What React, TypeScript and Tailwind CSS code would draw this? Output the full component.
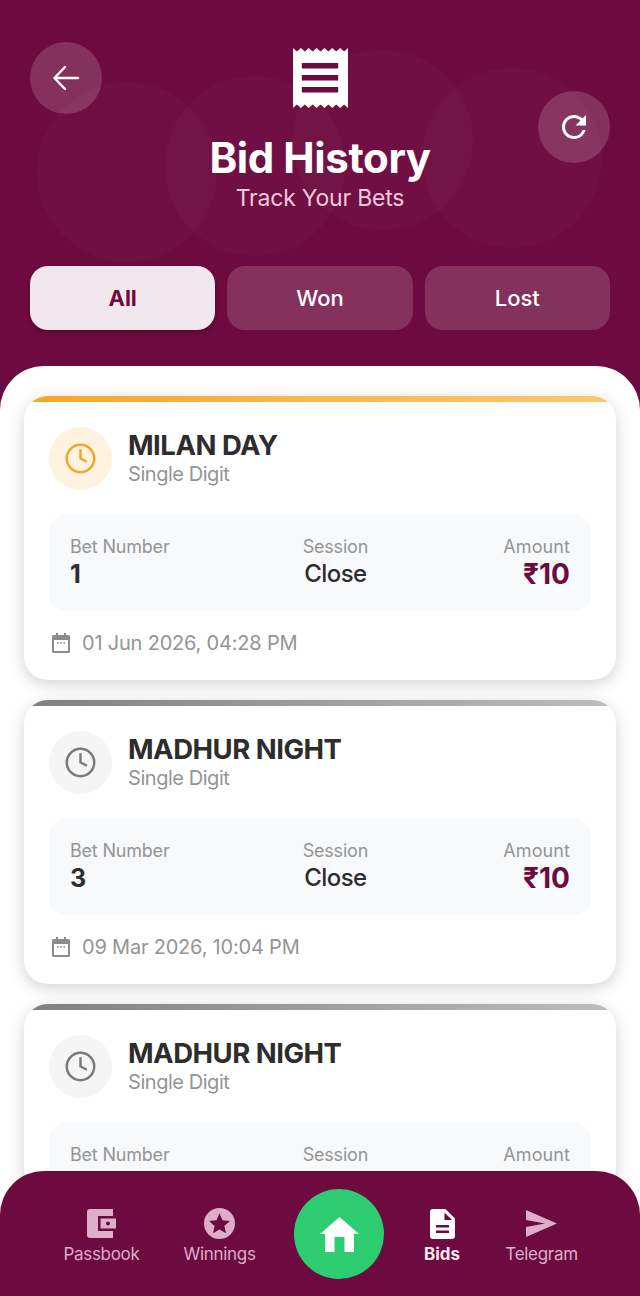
import type { ReactNode } from "react";
import { Clock } from "lucide-react";

const font = { fontFamily: "Inter, sans-serif" };

function ReceiptIcon() {
  return (
    <svg width="55" height="60" viewBox="0 0 56 60" preserveAspectRatio="none" className="block">
      <path
        fill="#fff"
        d="M0 0l4 3.500 4-3.500 4 3.500 4-3.500 4 3.500 4-3.500 4 3.500 4-3.500 4 3.500 4-3.500 4 3.500 4-3.500 4 3.500 4-3.500v60l-4-3.500-4 3.500-4-3.500-4 3.500-4-3.500-4 3.500-4-3.500-4 3.500-4-3.500-4 3.500-4-3.500-4 3.500-4-3.500-4 3.500z"
      />
      <rect x="9" y="15" width="37" height="5.500" fill="#6d0a3f" />
      <rect x="9" y="27" width="37" height="5.500" fill="#6d0a3f" />
      <rect x="9" y="39" width="37" height="5.500" fill="#6d0a3f" />
    </svg>
  );
}

type Bid = {
  market: string;
  number: string;
  date?: string;
  pending: boolean;
};

// la 3e carte passe sous la barre du bas, sa date n'est jamais visible
const bids: Bid[] = [
  { market: "MILAN DAY", number: "1", date: "01 Jun 2026, 04:28 PM", pending: true },
  { market: "MADHUR NIGHT", number: "3", date: "09 Mar 2026, 10:04 PM", pending: false },
  { market: "MADHUR NIGHT", number: "3", pending: false },
];

function BidCard({ bid }: { bid: Bid }) {
  return (
    <div className="h-[284px] shrink-0 overflow-hidden rounded-[24px] bg-white shadow-[0_4px_16px_rgba(0,0,0,0.18)]">
      <div
        className={
          bid.pending
            ? "h-[6px] bg-gradient-to-r from-[#f5a623] to-[#fdc96b]"
            : "h-[6px] bg-gradient-to-r from-[#808080] to-[#bdbdbd]"
        }
      />
      <div className="px-[25px] pt-[25px]">
        <div className="flex items-center gap-[16px]">
          <div
            className={
              bid.pending
                ? "flex h-[63px] w-[63px] items-center justify-center rounded-full bg-[#fff3e0]"
                : "flex h-[63px] w-[63px] items-center justify-center rounded-full bg-[#f5f5f5]"
            }
          >
            <Clock size={33} strokeWidth={1.8} color={bid.pending ? "#e8a92a" : "#7a7a7a"} />
          </div>
          <div>
            <div className="text-[27.5px] font-bold leading-[31px] tracking-[-0.5px] text-[#2d2d2d]">{bid.market}</div>
            <div className="text-[20px] leading-[26px] tracking-[-0.45px] text-[#949494]">Single Digit</div>
          </div>
        </div>
        <div className="mt-[25px] flex h-[96px] items-start justify-between rounded-[16px] bg-[#f8f9fb] px-[21px] pt-[20px]">
          <div>
            <div className="text-[18px] leading-[24px] tracking-[-0.2px] text-[#949494]">Bet Number</div>
            <div className="text-[25px] font-bold leading-[30px] text-[#2d2d2d]">{bid.number}</div>
          </div>
          <div className="-ml-[2px] text-center">
            <div className="text-[18px] leading-[24px] tracking-[-0.2px] text-[#949494]">Session</div>
            <div className="text-[24px] font-medium leading-[30px] tracking-[-0.6px] text-[#2d2d2d]">Close</div>
          </div>
          <div className="text-right">
            <div className="text-[18px] leading-[24px] tracking-[0.1px] text-[#949494]">Amount</div>
            <div className="text-[28px] font-bold leading-[30px] text-[#6d0a3f]">₹10</div>
          </div>
        </div>
        {bid.date && (
          <div className="mt-[18px] flex items-center gap-[12px] pl-[3px]">
            <svg width="18" height="20" viewBox="0 0 18 20" fill="#8c8c8c">
              <path
                fillRule="evenodd"
                d="M4 0h2v2h6V0h2v2h2.500A1.500 1.500 0 0 1 18 3.500v15a1.500 1.500 0 0 1-1.500 1.500h-15A1.500 1.500 0 0 1 0 18.500v-15A1.500 1.500 0 0 1 1.500 2H4zM2 7v11h14V7z"
              />
              <rect x="5" y="9" width="1.600" height="1.600" />
              <rect x="8.200" y="9" width="1.600" height="1.600" />
              <rect x="11.400" y="9" width="1.600" height="1.600" />
            </svg>
            <span className="text-[20px] leading-[28px] tracking-[-0.2px] text-[#949494]">{bid.date}</span>
          </div>
        )}
      </div>
    </div>
  );
}

function NavItem({ label, active, icon, className }: { label: string; active?: boolean; icon: ReactNode; className: string }) {
  return (
    <div className={className}>
      <div className="flex flex-col items-center">
        <div className="flex h-[31px] items-center justify-center">{icon}</div>
        <span
          className={
            active
              ? "mt-[4px] text-[17px] font-bold leading-[22px] text-[#f6e6ef]"
              : "mt-[4px] whitespace-nowrap text-[17px] leading-[22px] tracking-[-0.3px] text-[#dcaeca]"
          }
        >
          {label}
        </span>
      </div>
    </div>
  );
}

export default function App() {
  return (
    <div style={font} className="relative h-[1296px] w-[640px] overflow-hidden bg-[#6d0a3f]">
      {/* cercles décoratifs */}
      <div className="absolute left-[37px] top-[82px] h-[180px] w-[180px] rounded-full bg-white/[0.025]" />
      <div className="absolute left-[165px] top-[76px] h-[180px] w-[180px] rounded-full bg-white/[0.025]" />
      <div className="absolute left-[293px] top-[50px] h-[180px] w-[180px] rounded-full bg-white/[0.025]" />
      <div className="absolute left-[422px] top-[68px] h-[180px] w-[180px] rounded-full bg-white/[0.025]" />

      <header className="relative h-[366px] px-[30px] pt-[42px]">
        <div className="flex items-start justify-between">
          <div className="flex h-[72px] w-[72px] items-center justify-center rounded-full bg-white/[0.16]">
            <svg width="30" height="30" viewBox="0 0 30 30" fill="none" stroke="#fff" strokeWidth="2.400" strokeLinecap="round" strokeLinejoin="round">
              <path d="M27 15H3.500M14 4L3.500 15 14 26" />
            </svg>
          </div>
          <div className="flex flex-col items-center pt-[6px]">
            <ReceiptIcon />
            <h1 className="mt-[26px] text-[42px] font-bold leading-[48px] tracking-[-0.4px] text-white">Bid History</h1>
            <p className="mt-[1px] text-[23px] leading-[30px] tracking-[-0.2px] text-[#f0c9de]">Track Your Bets</p>
          </div>
          <div className="mt-[49px] flex h-[72px] w-[72px] items-center justify-center rounded-full bg-white/[0.16]">
            <svg width="36" height="36" viewBox="0 0 24 24" fill="#fff">
              <path d="M17.650 6.350A7.958 7.958 0 0 0 12 4c-4.420 0-7.990 3.580-7.990 8s3.570 8 7.990 8c3.730 0 6.840-2.550 7.730-6h-2.080A5.990 5.990 0 0 1 12 18c-3.310 0-6-2.690-6-6s2.690-6 6-6c1.660 0 3.140.690 4.220 1.780L13 11h7V4l-2.350 2.350z" />
            </svg>
          </div>
        </div>
        <div className="mt-[53px] grid grid-cols-3 gap-[12px]">
          <div className="flex h-[64px] items-center justify-center rounded-[18px] bg-[#f3e7ee] text-[22px] font-bold text-[#6d0a3f] shadow-[0_2px_4px_rgba(0,0,0,0.25)]">
            All
          </div>
          <div className="flex h-[64px] items-center justify-center rounded-[18px] bg-white/[0.16] text-[22px] font-medium text-white">
            Won
          </div>
          <div className="flex h-[64px] items-center justify-center rounded-[18px] bg-white/[0.16] text-[22px] font-medium text-white">
            Lost
          </div>
        </div>
      </header>

      <main className="flex h-[930px] flex-col gap-[20px] overflow-hidden rounded-t-[44px] bg-white px-[24px] pt-[30px]">
        {bids.map((b, i) => (
          <BidCard key={i} bid={b} />
        ))}
      </main>

      <nav className="absolute bottom-0 left-0 right-0 flex h-[125px] items-start rounded-t-[44px] bg-[#6d0a3f] pl-[64px]">
        <NavItem
          className="mt-[37px] w-[75px]"
          label="Passbook"
          icon={
            <svg width="29" height="29" viewBox="0 0 29 29">
              <path fill="#dcaeca" d="M3 0h23v29H3a3 3 0 0 1-3-3V3a3 3 0 0 1 3-3z" />
              <path fill="#6d0a3f" d="M11 7h18v15H11z" />
              <path fill="#dcaeca" fillRule="evenodd" d="M13.500 9.500H29v10H13.500zM21 12.500a2 2 0 1 0 0 4 2 2 0 0 0 0-4z" />
              <path fill="#6d0a3f" d="M26 0h3v7h-3zM26 22h3v7h-3z" />
            </svg>
          }
        />
        <NavItem
          className="ml-[45px] mt-[37px] w-[71px]"
          label="Winnings"
          icon={
            <svg width="31" height="31" viewBox="0 0 32 32">
              <circle cx="16" cy="16" r="16" fill="#dcaeca" />
              <path fill="#6d0a3f" d="M16 5.500l3.100 7.200 7.700.7-5.800 5.100 1.700 7.600L16 22.100l-6.700 4 1.700-7.600-5.800-5.100 7.700-.7z" />
            </svg>
          }
        />
        <div className="ml-[39px] mt-[18px] flex h-[90px] w-[90px] items-center justify-center rounded-full bg-[#2ecc71]">
          <svg width="39" height="35" viewBox="0 0 39 35" fill="#fff">
            <path d="M19.500 0L39 17h-5v18h-9.500V20h-10v15H5V17H0z" />
          </svg>
        </div>
        <NavItem
          className="ml-[40px] mt-[37px] w-[36px]"
          label="Bids"
          active
          icon={
            <svg width="25" height="30" viewBox="0 0 25 30" fill="#fff">
              <path
                fillRule="evenodd"
                d="M3 0h12.500L25 9.500V27a3 3 0 0 1-3 3H3a3 3 0 0 1-3-3V3a3 3 0 0 1 3-3zM14.500 3.500V11H22zM6 16v2.500h13V16zM6 21.500V24h13v-2.500z"
              />
            </svg>
          }
        />
        <NavItem
          className="ml-[46px] mt-[37px] w-[71px]"
          label="Telegram"
          icon={
            <svg width="31" height="27" viewBox="0 0 31 27" fill="#dcaeca">
              <path d="M0 0l31 13.500L0 27V17l19-3.500L0 10z" />
            </svg>
          }
        />
      </nav>
    </div>
  );
}
